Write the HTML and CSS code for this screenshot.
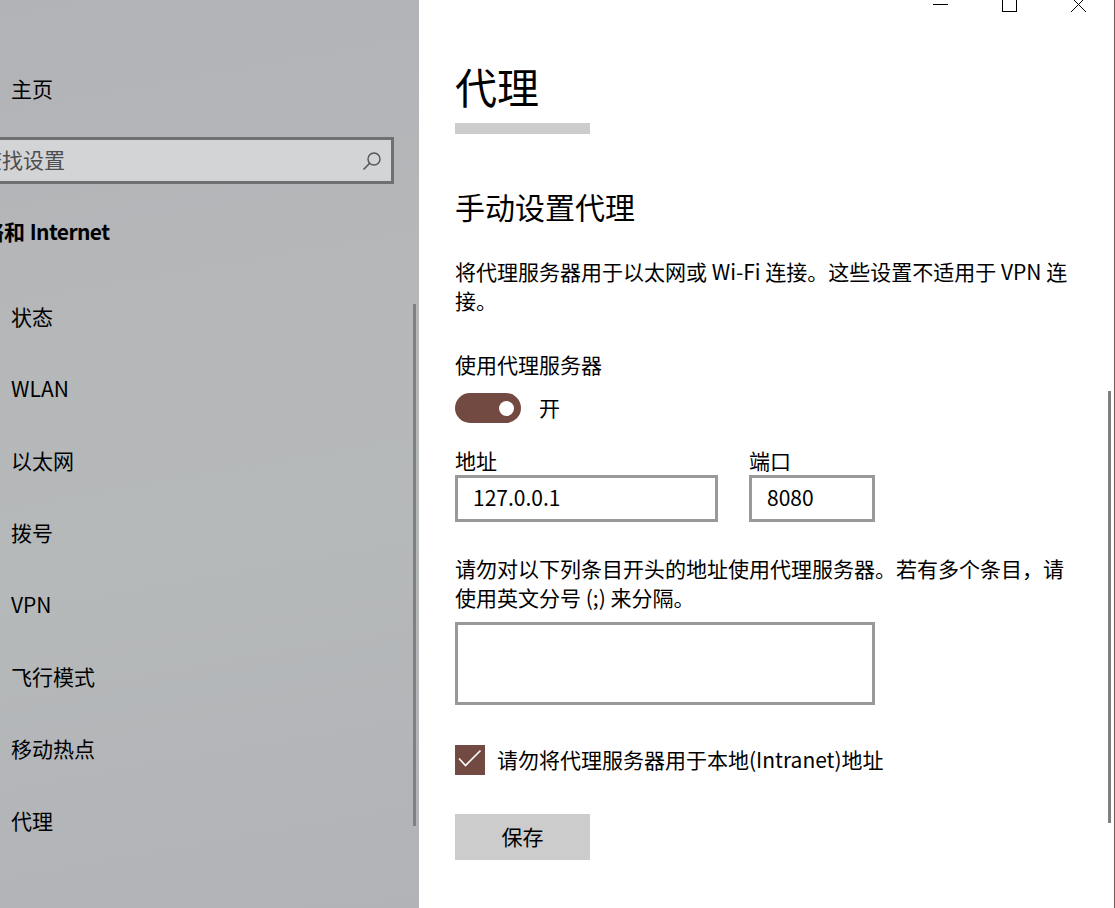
FILE: index.html
```html
<!DOCTYPE html>
<html lang="zh-CN">
<head>
<meta charset="utf-8">
<title>代理</title>
<link rel="stylesheet" href="styles.css">
</head>
<body>
<div class="window">
  <aside class="nav">
    <div class="nav-inner">
      <div class="nav-home">主页</div>
      <div class="search">
        <span class="search-text">查找设置</span>
        <svg class="search-icon" width="20" height="20" viewBox="0 0 20 20">
          <circle cx="12" cy="8" r="6" fill="none" stroke="#555" stroke-width="1.4"/>
          <line x1="7.6" y1="12.4" x2="1.5" y2="18.5" stroke="#555" stroke-width="1.5"/>
        </svg>
      </div>
      <div class="nav-group">网络和 <span class="latin">Internet</span></div>
      <ul class="nav-list">
        <li>状态</li>
        <li>WLAN</li>
        <li>以太网</li>
        <li>拨号</li>
        <li>VPN</li>
        <li>飞行模式</li>
        <li>移动热点</li>
        <li>代理</li>
      </ul>
    </div>
    <div class="nav-scroll"></div>
  </aside>
  <main class="content">
    <h1 class="title">代理</h1>
    <div class="title-bar"></div>
    <h2 class="subtitle">手动设置代理</h2>
    <p class="text para1">将代理服务器用于以太网或 Wi-Fi 连接。这些设置不适用于 VPN 连接。</p>
    <div class="text label-use">使用代理服务器</div>
    <div class="toggle-row">
      <span class="toggle"><span class="knob"></span></span>
      <span class="text">开</span>
    </div>
    <div class="fields">
      <div class="field">
        <div class="text">地址</div>
        <div class="input addr">127.0.0.1</div>
      </div>
      <div class="field">
        <div class="text">端口</div>
        <div class="input port">8080</div>
      </div>
    </div>
    <p class="text para2">请勿对以下列条目开头的地址使用代理服务器。若有多个条目，请使用英文分号 (;) 来分隔。</p>
    <div class="textarea"></div>
    <div class="check-row">
      <span class="checkbox">
        <svg width="30" height="30" viewBox="0 0 30 30">
          <polyline points="4,13.5 10.5,20.5 25.5,5.5" fill="none" stroke="#fff" stroke-width="1.6"/>
        </svg>
      </span>
      <span class="text">请勿将代理服务器用于本地(Intranet)地址</span>
    </div>
    <div class="btn">保存</div>
  </main>
  <div class="main-scroll"></div>
  <svg class="caption" width="200" height="20" viewBox="900 0 200 20">
    <line x1="933" y1="4.5" x2="948" y2="4.5" stroke="#000" stroke-width="1"/>
    <rect x="1002.5" y="-4.5" width="14" height="16" fill="none" stroke="#000" stroke-width="1"/>
    <line x1="1071" y1="-3" x2="1086" y2="12" stroke="#000" stroke-width="1"/>
    <line x1="1086" y1="-3" x2="1071" y2="12" stroke="#000" stroke-width="1"/>
  </svg>
</div>
</body>
</html>
```
FILE: styles.css
```css
html, body {
  margin: 0;
  padding: 0;
  overflow: hidden;
}
body {
  font-family: "Noto Sans CJK SC", "Noto Sans", sans-serif;
  color: #000;
  background: #fff;
}
.window {
  position: relative;
  display: flex;
  width: 1115px;
  height: 908px;
  box-sizing: border-box;
  border-right: 1px solid #7a5650;
  overflow: hidden;
}
.nav {
  position: relative;
  flex: 0 0 419px;
  height: 908px;
  overflow: hidden;
  background: linear-gradient(170deg, #b2b3b7 0%, #b5b7b9 35%, #b6b9ba 60%, #b1b3b7 100%);
}
.nav-inner {
  margin-left: -38px;
  padding-top: 52px;
}
.nav-home {
  height: 72px;
  line-height: 72px;
  font-size: 21px;
  padding-left: 49px;
}
.search {
  margin-top: 13px;
  width: 432px;
  height: 47px;
  box-sizing: border-box;
  border: 3px solid #6f7071;
  background: #d3d4d5;
  display: flex;
  align-items: center;
  justify-content: space-between;
  padding: 0 9px 0 16px;
}
.search-text {
  font-size: 21px;
  line-height: 28px;
  color: #4d4e50;
  margin-top: -3px;
}
.search-icon {
  display: block;
}
.nav-group {
  margin-top: 23px;
  height: 48px;
  line-height: 48px;
  font-size: 21px;
  font-weight: bold;
}
.nav-group .latin {
  letter-spacing: -0.6px;
}
.nav-list {
  list-style: none;
  margin: 25px 0 0;
  padding: 0;
}
.nav-list li {
  height: 72px;
  line-height: 72px;
  font-size: 21px;
  padding-left: 49px;
}
.nav-scroll {
  position: absolute;
  left: 413px;
  top: 304px;
  width: 3px;
  height: 522px;
  background: #808080;
}
.content {
  flex: 1 1 auto;
  padding: 58px 0 0 36px;
  overflow: hidden;
  display: flex;
  flex-direction: column;
  align-items: flex-start;
}
.title {
  margin: 0;
  font-size: 42px;
  font-weight: normal;
  line-height: 56px;
}
.title-bar {
  margin-top: 9px;
  width: 135px;
  height: 11px;
  background: #cccccc;
}
.subtitle {
  margin: 52px 0 0;
  font-size: 30px;
  font-weight: normal;
  line-height: 40px;
}
.text {
  font-size: 21px;
  line-height: 28px;
}
.para1, .para2 {
  margin: 0;
  width: 615px;
  line-height: 29px;
}
.para1 {
  margin-top: 31px;
}
.label-use {
  margin-top: 35px;
}
.toggle-row {
  margin-top: 15px;
  display: flex;
  align-items: center;
  gap: 18px;
  height: 30px;
}
.toggle-row .text {
  margin-top: -2px;
}
.toggle {
  position: relative;
  display: block;
  width: 66px;
  height: 30px;
  border-radius: 15px;
  background: #734a41;
}
.knob {
  position: absolute;
  left: 44px;
  top: 7.5px;
  width: 15px;
  height: 15px;
  border-radius: 50%;
  background: #fff;
}
.fields {
  margin-top: 23px;
  display: flex;
  gap: 31px;
}
.field {
  display: flex;
  flex-direction: column;
}
.field > .text {
  margin-bottom: 1px;
}
.input {
  box-sizing: border-box;
  height: 47px;
  border: 3px solid #999999;
  padding-left: 15px;
  font-size: 21px;
  line-height: 39px;
  background: #fff;
}
.addr { width: 263px; }
.port { width: 126px; }
.para2 {
  margin-top: 32px;
}
.textarea {
  margin-top: 10px;
  box-sizing: border-box;
  width: 420px;
  height: 83px;
  border: 3px solid #999999;
}
.check-row {
  margin-top: 40px;
  display: flex;
  align-items: center;
  gap: 12px;
  height: 30px;
}
.check-row .text {
  margin-top: -2px;
}
.checkbox {
  display: block;
  width: 30px;
  height: 30px;
  background: #734a41;
}
.checkbox svg { display: block; }
.btn {
  margin-top: 39px;
  width: 135px;
  height: 46px;
  background: #cccccc;
  font-size: 21px;
  line-height: 44px;
  text-align: center;
}
.main-scroll {
  position: absolute;
  left: 1108px;
  top: 391px;
  width: 3px;
  height: 432px;
  background: #7f7f7f;
}
.caption {
  position: absolute;
  left: 900px;
  top: 0;
  display: block;
}
```
